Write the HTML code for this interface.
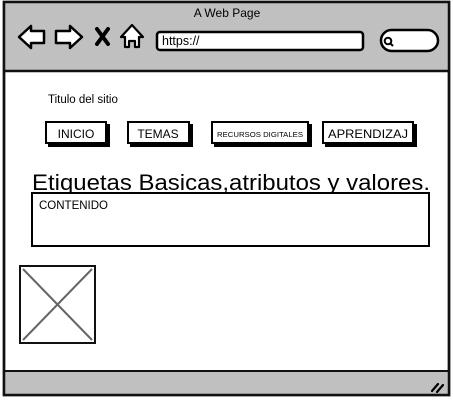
<!DOCTYPE html>
<html><head><meta charset="utf-8"><style>
html,body{margin:0;padding:0;background:#fff;width:453px;height:400px;overflow:hidden}
svg{display:block}
text{font-family:"Liberation Sans",sans-serif;fill:#000}
</style></head><body>
<svg width="453" height="400" viewBox="0 0 453 400">
<rect x="4" y="2" width="445" height="393" fill="#fff" stroke="#111" stroke-width="2.5"/>
<rect x="5" y="3" width="443" height="68" fill="#c0c0c0"/>
<line x1="4" y1="71" x2="449" y2="71" stroke="#111" stroke-width="2.5"/>
<text x="227" y="17" font-size="12" text-anchor="middle">A Web Page</text>
<path d="M19,37 L31,26 L31,31 L44,31 L44,43 L31,43 L31,48 Z" fill="#fff" stroke="#000" stroke-width="2.5" stroke-linejoin="round"/>
<path d="M82,37 L70,26 L70,31 L56,31 L56,43 L70,43 L70,48 Z" fill="#fff" stroke="#000" stroke-width="2.5" stroke-linejoin="round"/>
<path d="M97,29 L108,44 M108,29 L97,44" stroke="#000" stroke-width="4" stroke-linecap="round"/>
<path d="M132,25 L143,37 L139,37 L139,47 L135,47 L135,41 L129,41 L129,47 L125,47 L125,37 L121,37 Z" fill="#fff" stroke="#000" stroke-width="2.2" stroke-linejoin="round"/>
<rect x="157" y="32" width="206" height="18" rx="3" fill="#fff" stroke="#000" stroke-width="2.5"/>
<text x="162" y="45" font-size="12.5">https://</text>
<rect x="381" y="30" width="57" height="21" rx="10.5" fill="#fff" stroke="#000" stroke-width="2.5"/>
<circle cx="388" cy="41" r="3.3" fill="none" stroke="#000" stroke-width="2"/>
<line x1="390" y1="43" x2="393" y2="46" stroke="#000" stroke-width="2"/>
<text x="48" y="103" font-size="11.5">Titulo del sitio</text>
<g stroke="#000" stroke-width="2">
<rect x="49" y="125" width="60" height="21" fill="#000"/>
<rect x="46" y="122" width="60" height="21" fill="#fff"/>
<rect x="131" y="125" width="61" height="21" fill="#000"/>
<rect x="128" y="122" width="61" height="21" fill="#fff"/>
<rect x="215" y="125" width="96" height="21" fill="#000"/>
<rect x="212" y="122" width="96" height="21" fill="#fff"/>
<rect x="326" y="125" width="90" height="21" fill="#000"/>
<rect x="323" y="122" width="90" height="21" fill="#fff"/>
</g>
<text x="76" y="138" font-size="12" text-anchor="middle">INICIO</text>
<text x="158" y="138" font-size="12" text-anchor="middle">TEMAS</text>
<text x="260" y="137" font-size="7" text-anchor="middle" textLength="86" lengthAdjust="spacingAndGlyphs">RECURSOS DIGITALES</text>
<text x="368" y="138" font-size="12" text-anchor="middle" textLength="80" lengthAdjust="spacingAndGlyphs">APRENDIZAJ</text>
<text x="32" y="190" font-size="22" textLength="398" lengthAdjust="spacingAndGlyphs">Etiquetas Basicas,atributos y valores.</text>
<rect x="32" y="193" width="397" height="53" fill="#fff" stroke="#000" stroke-width="2"/>
<text x="39" y="209" font-size="11.5">CONTENIDO</text>
<rect x="20" y="266" width="75" height="77" fill="#fff" stroke="#111" stroke-width="2"/>
<path d="M23,269 L92,340 M92,269 L23,340" stroke="#666" stroke-width="2"/>
<rect x="5" y="371" width="443" height="24" fill="#c0c0c0"/>
<line x1="4" y1="371" x2="449" y2="371" stroke="#111" stroke-width="2"/>
<rect x="4" y="2" width="445" height="393" fill="none" stroke="#111" stroke-width="2.5"/>
<path d="M432,391 L438,384 M437,392 L443,385" stroke="#000" stroke-width="2.2" stroke-linecap="round"/>
</svg>
</body></html>
